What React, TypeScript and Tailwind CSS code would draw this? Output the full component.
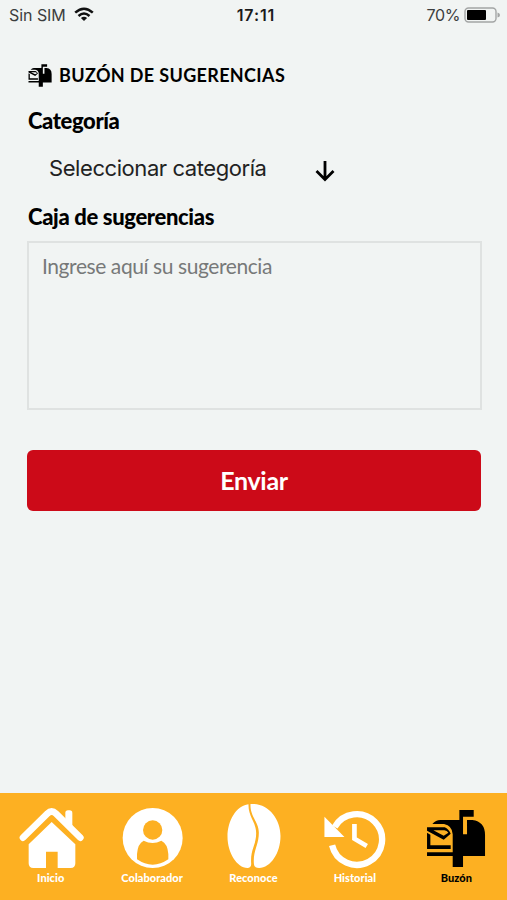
import React from 'react';

interface IconProps {
  className?: string;
}

function HomeIcon({ className }: IconProps) {
  return (
    <svg viewBox="47 54 210 198" className={className} fill="currentColor">
      <path d="M195 120V84q0-8 8-8h5q8 0 8 8v58z" />
      <path
        d="M68 158L141 86Q154 73 167 86L240 158"
        fill="none"
        stroke="currentColor"
        strokeWidth="20"
        strokeLinecap="round"
        strokeLinejoin="round"
      />
      <path d="M154 111L225 178V235Q225 249 211 249H172V200H137V249H99Q85 249 85 235V178Z" />
    </svg>
  );
}

function UserIcon({ className }: IconProps) {
  return (
    <svg viewBox="351 54 210 198" className={className}>
      <circle cx="458" cy="159" r="90" fill="currentColor" />
      <path
        d="M411 223V207Q413 176 431 167Q458 181 484 167Q503 176 505 207V223Q458 255 411 223Z"
        fill="#fdb022"
      />
      <circle cx="458" cy="135" r="29" fill="#fdb022" />
    </svg>
  );
}

function BeanIcon({ className }: IconProps) {
  return (
    <svg viewBox="55.5 54 210 198" className={className} fill="currentColor">
      <path d="M147 58C109 63 84 108 84 155C84 202 112 248 144 249C151 249 156 244 155 235C152 193 170 181 170 145C170 111 146 96 147 58Z" />
      <path d="M153 57C205 53 243 100 243 153C243 205 213 248 179 249C168 249 163 244 163 233C161 195 178 180 178 143C178 110 151 95 153 57Z" />
    </svg>
  );
}

function HistoryIcon({ className }: IconProps) {
  return (
    <svg viewBox="359.7 54 210 198" className={className} fill="none" stroke="currentColor">
      <path d="M404 126A76 76 0 1 1 396 181" strokeWidth="19" />
      <path d="M463 117V161L500 183" strokeWidth="14" />
      <path d="M373 95L433 156H373Z" fill="currentColor" stroke="none" />
    </svg>
  );
}

function MailboxIcon({ className, viewBox = '63.9 54 210 198' }: IconProps & { viewBox?: string }) {
  return (
    <svg viewBox={viewBox} className={className} fill="currentColor" fillRule="evenodd">
      {/* Box, flag and post */}
      <path d="M98 117Q108 105 122 105H179V75H222V95H190V148H202V105H218Q256 110 256 150V213H190V246H159V213H82V202H159V148Q158 122 133 117Z" />
      {/* Letter */}
      <path d="M82 127H135Q147 132 153 146L132 164L82 137ZM101 136L132 152L146 143Q142 137 134 136Z" />
      <path d="M82 143L92 149V181H153V192H82Z" />
    </svg>
  );
}

export default function App() {
  const tabs = [
    { label: 'Inicio', icon: HomeIcon },
    { label: 'Colaborador', icon: UserIcon },
    { label: 'Reconoce', icon: BeanIcon },
    { label: 'Historial', icon: HistoryIcon },
    { label: 'Buzón', icon: MailboxIcon, active: true },
  ];

  return (
    <div className="flex h-[900px] w-[507px] flex-col overflow-hidden bg-[#f1f4f3] font-['Lato',sans-serif] text-black">
      {/* Status bar */}
      <header className="grid h-[30px] grid-cols-3 items-center px-[9px] font-['Inter',sans-serif] text-[16px] text-[#3c3e3e]">
        <div className="flex items-center gap-2">
          <span className="tracking-[-0.05px]">Sin SIM</span>
          <svg viewBox="0 0 20 15" className="-mt-px h-[15px] w-5" fill="none" stroke="#111" strokeWidth="2.5">
            <path d="M1.2 5.7Q10-2.3 18.8 5.7" />
            <path d="M4.5 9Q10 4 15.5 9" />
            <path d="M10 14L6.9 11Q10 8.4 13.1 11Z" fill="#111" stroke="none" />
          </svg>
        </div>
        <span className="pl-[5px] text-center font-semibold tracking-[0.9px] text-[#1b1b1b]">17:11</span>
        <div className="flex items-center justify-end gap-1">
          <span className="tracking-[-0.4px]">70%</span>
          <svg viewBox="0 0 36 16" className="-mr-[2px] h-4 w-9">
            <rect x="1" y="1" width="31" height="14" rx="3.5" fill="none" stroke="#a3a5a5" strokeWidth="1.4" />
            <rect x="3" y="3" width="19" height="10" rx="1" fill="#000" />
            <path d="M33.5 5.5Q36 6 36 8T33.5 10.5Z" fill="#a3a5a5" />
          </svg>
        </div>
      </header>

      <main className="flex flex-1 flex-col px-[27px]">
        <h1 className="mt-[33px] flex h-6 items-center gap-[7px] text-[18px] font-bold leading-6 tracking-[0.35px]">
          <MailboxIcon viewBox="80 74 177 173" className="ml-[1px] h-[23px] w-6" />
          BUZÓN DE SUGERENCIAS
        </h1>

        <label className="mt-[18px] h-8 pl-px text-[22px] font-black leading-8 tracking-[-0.4px]">Categoría</label>
        <button className="mt-3 flex h-10 w-[308px] items-center justify-between pl-[22px] text-left font-['Inter',sans-serif] text-[22px] tracking-[-0.43px] text-[#222]">
          <span className="-mt-px">Seleccionar categoría</span>
          <svg viewBox="0 0 20 22" className="mt-1 h-[22px] w-5" fill="none" stroke="#000" strokeWidth="2.8">
            <path d="M10 1V19M1.5 11L10 19.5L18.5 11" />
          </svg>
        </button>

        <label className="mt-3 h-8 pl-px text-[22px] font-black leading-8 tracking-[-0.35px]">
          Caja de sugerencias
        </label>
        <textarea
          placeholder="Ingrese aquí su sugerencia"
          className="mt-2 h-[169px] w-[455px] resize-none border-2 border-[#dfe2e1] bg-transparent px-[13px] py-[7px] text-[21px] leading-8 tracking-[-0.42px] placeholder:text-[#777979]"
        />

        <button className="mt-10 h-[61px] w-[454px] rounded-[6px] bg-[#cc0a18] text-[25px] font-bold tracking-[-0.3px] text-white">
          Enviar
        </button>
      </main>

      {/* Tab bar */}
      <nav className="grid h-[107px] grid-cols-5 bg-[#fdb022] pt-[10px]">
        {tabs.map((tab) => {
          const Icon = tab.icon;

          return (
            <button
              key={tab.label}
              className={`flex flex-col items-center ${tab.active ? 'text-black' : 'text-white'}`}
            >
              <Icon className="h-[66px] w-[70px]" />
              <span className="mt-px text-[11px] font-black leading-4 tracking-[0.05px]">{tab.label}</span>
            </button>
          );
        })}
      </nav>
    </div>
  );
}
